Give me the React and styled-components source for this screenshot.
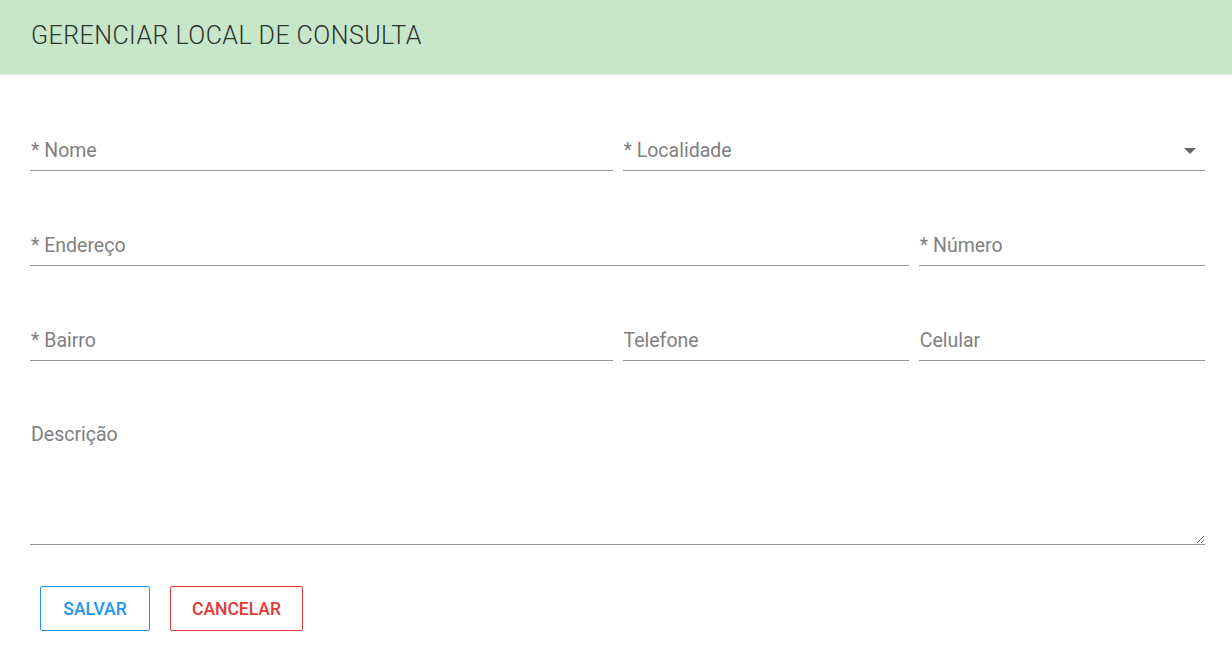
import styled, { createGlobalStyle } from 'styled-components';

const GlobalStyle = createGlobalStyle`
  body {
    margin: 0;
    background: #fff;
    font-family: Roboto, "Liberation Sans", sans-serif;
  }
  * {
    box-sizing: border-box;
  }
`;

const Header = styled.header`
  height: 74px;
  display: flex;
  align-items: center;
  padding: 0 0 3px 31px;
  background: #c8e6c9;
  box-shadow: 0 1px 2px rgba(0, 0, 0, 0.12);
`;

const Title = styled.h1`
  margin: 0;
  font-size: 25px;
  font-weight: 300;
  color: #2b332c;
  letter-spacing: 0.45px;
`;

const Form = styled.form`
  padding: 57px 27px 0 30px;
`;

const Grid = styled.div`
  display: grid;
  grid-template-columns: repeat(4, 1fr);
  column-gap: 10px;
  row-gap: 55px;
`;

const Field = styled.div`
  position: relative;
  grid-column: span ${(p) => p.span || 1};
`;

const Input = styled.input`
  display: block;
  width: 100%;
  height: 40px;
  padding: 0 1px 1px;
  border: none;
  border-bottom: 1px solid #949494;
  outline: none;
  font-family: Roboto, "Liberation Sans", sans-serif;
  font-size: 19.5px;
  color: #333;
  background: transparent;

  &::placeholder {
    color: #808080;
  }
`;

const Caret = styled.span`
  position: absolute;
  right: 9px;
  top: 17px;
  width: 0;
  height: 0;
  border-left: 6px solid transparent;
  border-right: 6px solid transparent;
  border-top: 6px solid #666;
  pointer-events: none;
`;

const TextArea = styled.textarea`
  display: block;
  width: 100%;
  height: 129px;
  padding: 7px 1px 0;
  border: none;
  border-bottom: 1px solid #949494;
  outline: none;
  resize: vertical;
  font-family: Roboto, "Liberation Sans", sans-serif;
  font-size: 19.5px;
  color: #333;

  &::placeholder {
    color: #808080;
  }
`;

const Actions = styled.div`
  display: flex;
  gap: 20px;
  padding: 41px 0 0 10px;
`;

const Button = styled.button`
  min-width: 110px;
  height: 45px;
  padding: 0 21px;
  background: #fff;
  border: 1px solid ${(p) => p.color};
  border-radius: 2px;
  color: ${(p) => p.color};
  font-family: Roboto, "Liberation Sans", sans-serif;
  font-size: 17.5px;
  font-weight: 500;
  text-transform: uppercase;
  cursor: pointer;
`;

function App() {
  return (
    <>
      <GlobalStyle />
      <Header>
        <Title>GERENCIAR LOCAL DE CONSULTA</Title>
      </Header>
      <Form onSubmit={(e) => e.preventDefault()}>
        <Grid>
          <Field span={2}>
            <Input placeholder="* Nome" />
          </Field>
          <Field span={2}>
            <Input placeholder="* Localidade" readOnly />
            <Caret />
          </Field>
          <Field span={3}>
            <Input placeholder="* Endereço" />
          </Field>
          <Field>
            <Input placeholder="* Número" />
          </Field>
          <Field span={2}>
            <Input placeholder="* Bairro" />
          </Field>
          <Field>
            <Input placeholder="Telefone" />
          </Field>
          <Field>
            <Input placeholder="Celular" />
          </Field>
          <Field span={4}>
            <TextArea placeholder="Descrição" />
          </Field>
        </Grid>
        <Actions>
          <Button type="submit" color="#2196f3">Salvar</Button>
          <Button type="button" color="#e53935">Cancelar</Button>
        </Actions>
      </Form>
    </>
  );
}

export default App;
